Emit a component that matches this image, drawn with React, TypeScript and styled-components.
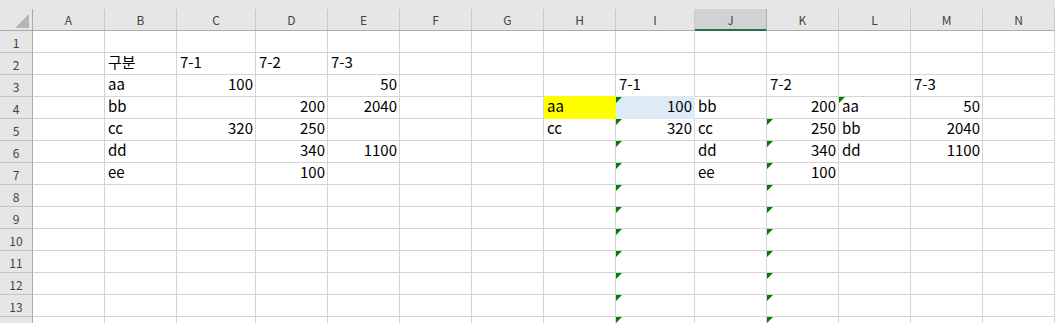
import React from "react";
import styled, { createGlobalStyle, css } from "styled-components";

const GlobalStyle = createGlobalStyle`
  html, body { margin: 0; padding: 0; background: #ffffff; }
  * { box-sizing: border-box; }
`;

const COLS = ["A", "B", "C", "D", "E", "F", "G", "H", "I", "J", "K", "L", "M", "N"];
const WIDTHS = [72, 72, 79, 72, 72, 72, 72, 72, 79, 72, 72, 72, 72, 72];
const TEMPLATE = `33px ${WIDTHS.map((w) => `${w}px`).join(" ")}`;
const ROWS = Array.from({ length: 14 }, (_, i) => i + 1);
const LAST_VISIBLE_LABEL = 13;
const SELECTED_COL = "J";

type Value = string | number;

const DATA: Record<string, Value> = {
  B2: "구분", C2: "7-1", D2: "7-2", E2: "7-3",
  B3: "aa", C3: 100, E3: 50,
  B4: "bb", D4: 200, E4: 2040,
  B5: "cc", C5: 320, D5: 250,
  B6: "dd", D6: 340, E6: 1100,
  B7: "ee", D7: 100,
  I3: "7-1", K3: "7-2", M3: "7-3",
  H4: "aa", I4: 100, J4: "bb", K4: 200, L4: "aa", M4: 50,
  H5: "cc", I5: 320, J5: "cc", K5: 250, L5: "bb", M5: 2040,
  J6: "dd", K6: 340, L6: "dd", M6: 1100,
  J7: "ee", K7: 100,
};

const FILLS: Record<string, string> = {
  H4: "#ffff00",
  I4: "#ddebf7",
};

const FLAGS = new Set<string>([
  "L4",
  ...ROWS.filter((r) => r >= 4).map((r) => `I${r}`),
  ...ROWS.filter((r) => r >= 5).map((r) => `K${r}`),
]);

const FONT = `"Noto Sans CJK KR", "Noto Sans", sans-serif`;

const Sheet = styled.div`
  width: 1055px;
  height: 323px;
  overflow: hidden;
  background: #ffffff;
  font-family: ${FONT};
`;

const HeaderRow = styled.div`
  display: grid;
  grid-template-columns: ${TEMPLATE};
  padding-top: 9px;
  background: #e6e6e6;
`;

const Corner = styled.div`
  height: 22px;
  display: flex;
  justify-content: flex-end;
  align-items: flex-end;
  padding: 0 3px 2px 0;
  border-right: 1px solid #ababab;
  border-bottom: 1px solid #ababab;
`;

const CornerMark = styled.span`
  width: 0;
  height: 0;
  border-left: 14px solid transparent;
  border-bottom: 14px solid #b5b5b5;
`;

const ColHeader = styled.div<{ $selected?: boolean }>`
  height: 22px;
  display: flex;
  align-items: center;
  justify-content: center;
  padding-bottom: 1px;
  font-size: 12px;
  color: #444444;
  border-right: 1px solid #c9c9c9;
  border-bottom: 1px solid #ababab;
  ${(p) =>
    p.$selected &&
    css`
      background: #d2d2d2;
      border-right-color: #ababab;
      border-bottom-color: #217346;
      box-shadow: inset 0 -1px 0 #217346;
    `}
`;

const BodyRow = styled.div`
  display: grid;
  grid-template-columns: ${TEMPLATE};
`;

const RowHeader = styled.div`
  height: 22px;
  display: flex;
  align-items: center;
  justify-content: center;
  padding-top: 2px;
  font-size: 12px;
  color: #444444;
  background: #e6e6e6;
  border-right: 1px solid #ababab;
  border-bottom: 1px solid #c4c4c4;
`;

const Cell = styled.div<{ $numeric?: boolean; $fill?: string }>`
  position: relative;
  height: 22px;
  padding: 0 2px 0 3px;
  font-size: 15px;
  line-height: 18px;
  color: #000000;
  white-space: nowrap;
  text-align: ${(p) => (p.$numeric ? "right" : "left")};
  border-right: 1px solid #d4d4d4;
  border-bottom: 1px solid #d4d4d4;
  ${(p) =>
    p.$fill &&
    css`
      background: ${p.$fill};
      border-right-color: ${p.$fill};
      border-bottom-color: ${p.$fill};
      box-shadow: 0 -1px 0 ${p.$fill};
    `}
`;

const ErrorFlag = styled.span`
  position: absolute;
  left: 0;
  top: 0;
  width: 0;
  height: 0;
  border-top: 6px solid #008000;
  border-right: 6px solid transparent;
`;

export default function App() {
  return (
    <>
      <GlobalStyle />
      <Sheet>
        <HeaderRow>
          <Corner>
            <CornerMark />
          </Corner>
          {COLS.map((c) => (
            <ColHeader key={c} $selected={c === SELECTED_COL}>
              {c}
            </ColHeader>
          ))}
        </HeaderRow>
        {ROWS.map((r) => (
          <BodyRow key={r}>
            <RowHeader>{r <= LAST_VISIBLE_LABEL ? r : null}</RowHeader>
            {COLS.map((c) => {
              const ref = `${c}${r}`;
              const v = DATA[ref];
              return (
                <Cell key={ref} $numeric={typeof v === "number"} $fill={FILLS[ref]}>
                  {FLAGS.has(ref) && <ErrorFlag />}
                  {v}
                </Cell>
              );
            })}
          </BodyRow>
        ))}
      </Sheet>
    </>
  );
}
